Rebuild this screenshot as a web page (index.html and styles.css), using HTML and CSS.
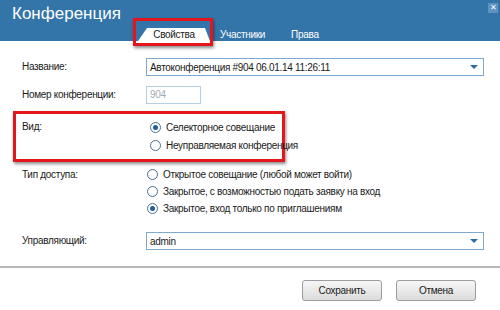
FILE: index.html
```html
<!DOCTYPE html>
<html lang="ru">
<head>
    <meta charset="UTF-8">
    <title>Конференция</title>
    <link rel="stylesheet" href="styles.css">
</head>
<body>
    <div class="dialog">
        <div class="header">
            <div class="title">Конференция</div>
            <div class="close">&#x2715;</div>
            <div class="tabs">
                <div class="tab tab-active">
                    <span class="tab-shape">Свойства</span>
                    <span class="mark"></span>
                </div>
                <div class="tab">Участники</div>
                <div class="tab">Права</div>
            </div>
        </div>

        <div class="form">
            <div class="row row-name">
                <div class="label">Название:</div>
                <div class="select">
                    <span>Автоконференция #904 06.01.14 11:26:11</span>
                    <span class="arrow"></span>
                </div>
            </div>
            <div class="row row-number">
                <div class="label">Номер конференции:</div>
                <div class="input disabled">904</div>
            </div>
            <div class="row row-kind">
                <div class="label">Вид:</div>
                <div class="radios">
                    <div class="radio checked"><span class="dot"></span>Селекторное совещание</div>
                    <div class="radio"><span class="dot"></span>Неуправляемая конференция</div>
                </div>
            </div>
            <div class="row row-access">
                <div class="label">Тип доступа:</div>
                <div class="radios">
                    <div class="radio"><span class="dot"></span>Открытое совещание (любой может войти)</div>
                    <div class="radio"><span class="dot"></span>Закрытое, с возможностью подать заявку на вход</div>
                    <div class="radio checked"><span class="dot"></span>Закрытое, вход только по приглашениям</div>
                </div>
            </div>
            <div class="row row-owner">
                <div class="label">Управляющий:</div>
                <div class="select">
                    <span>admin</span>
                    <span class="arrow"></span>
                </div>
            </div>
        </div>

        <div class="footer">
            <button class="btn">Сохранить</button>
            <button class="btn">Отмена</button>
        </div>
    </div>
</body>
</html>
```

FILE: styles.css
```css
body {
    margin: 0;
    font-family: "Liberation Sans", Arial, sans-serif;
    font-size: 10px;
    letter-spacing: -0.3px;
    color: #1a1a1a;
    background: white;
}
.dialog {
    width: 500px;
    height: 310px;
    overflow: hidden;
    white-space: nowrap;
}
.header {
    position: relative;
    height: 41px;
    background-color: #3375a8;
}
.title {
    padding: 3px 0 0 12px;
    font-size: 17px;
    letter-spacing: 0;
    color: white;
    line-height: 22px;
}
.close {
    position: absolute;
    top: 3px;
    right: 2px;
    width: 10px;
    height: 10px;
    background-color: #5e93c0;
    color: white;
    font-size: 8px;
    line-height: 10px;
    text-align: center;
}
.tabs {
    display: flex;
    align-items: flex-end;
    margin: 3px 0 0 138px;
    height: 13px;
}
.tab {
    color: white;
    font-size: 10px;
    line-height: 12px;
    margin-left: 10px;
}
.tab-active {
    position: relative;
    margin-left: 0;
}
.tab:last-child {
    margin-left: 26px;
}
.tab-shape {
    display: block;
    width: 72px;
    height: 13px;
    background: white;
    color: #1a1a1a;
    text-align: center;
    line-height: 14px;
    clip-path: polygon(9px 0, 67px 0, 72px 100%, 0 100%);
}
.mark {
    position: absolute;
    left: -5px;
    top: -10px;
    width: 80px;
    height: 28px;
    box-sizing: border-box;
    border: 3px solid #e3161c;
    box-shadow: 1px 2px 3px rgba(0, 0, 0, 0.45);
}
.form {
    padding: 17px 16px 0 13px;
}
.row {
    display: flex;
    padding-left: 9px;
}
.label {
    width: 124px;
    flex-shrink: 0;
    line-height: 18px;
}
.select {
    flex: 1;
    display: flex;
    justify-content: space-between;
    align-items: center;
    height: 18px;
    box-sizing: border-box;
    border: 1px solid #7fa9cf;
    padding: 0 5px 0 3px;
}
.arrow {
    width: 0;
    height: 0;
    border-left: 4px solid transparent;
    border-right: 4px solid transparent;
    border-top: 4px solid #2b6aa3;
}
.input {
    width: 55px;
    height: 18px;
    box-sizing: border-box;
    border: 1px solid #b6cfe3;
    padding: 0 3px;
    line-height: 16px;
}
.disabled {
    color: #a5adb5;
}
.row-number {
    margin-top: 10px;
}
.row-kind {
    margin-top: 7px;
    width: 272px;
    box-sizing: border-box;
    border: 3px solid #e3161c;
    box-shadow: 1px 2px 3px rgba(0, 0, 0, 0.45);
    padding: 4px 0 5px 6px;
}
.row-kind .label {
    width: 127px;
}
.radios {
    display: flex;
    flex-direction: column;
}
.radio {
    display: flex;
    align-items: center;
    height: 18px;
}
.row-access {
    margin-top: 4px;
}
.row-access .label,
.row-access .radio {
    height: 17px;
    line-height: 17px;
}
.dot {
    width: 9px;
    height: 9px;
    border: 1px solid #4d6f8f;
    border-radius: 50%;
    margin: 0 5px 0 1px;
    position: relative;
    background: white;
    flex-shrink: 0;
}
.checked .dot::after {
    content: "";
    position: absolute;
    left: 2px;
    top: 2px;
    width: 5px;
    height: 5px;
    border-radius: 50%;
    background: #1f5c99;
}
.row-owner {
    margin-top: 15px;
}
.footer {
    margin-top: 16px;
    border-top: 2px solid #b8b8b8;
    display: flex;
    justify-content: flex-end;
    gap: 14px;
    padding: 12px 24px 0 0;
}
.btn {
    width: 80px;
    height: 21px;
    font-family: "Liberation Sans", Arial, sans-serif;
    font-size: 10px;
    letter-spacing: -0.3px;
    color: #1a1a1a;
    border: 1px solid #9c9c9c;
    border-radius: 3px;
    background: linear-gradient(#f6f6f6, #dcdcdc);
}
```
